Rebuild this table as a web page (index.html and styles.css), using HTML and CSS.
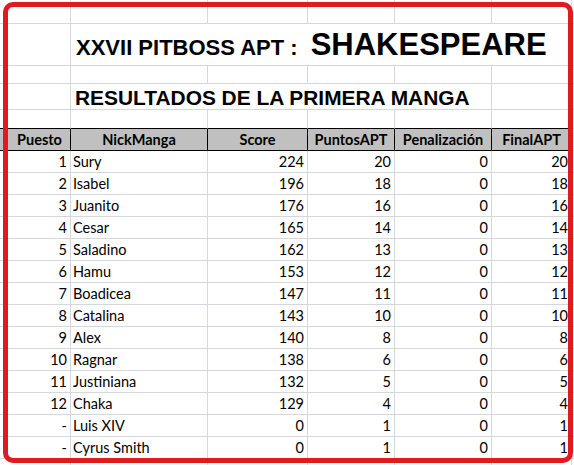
FILE: index.html
```html
<!DOCTYPE html>
<html lang="es">
<head>
<meta charset="utf-8">
<title>XXVII PITBOSS APT : SHAKESPEARE</title>
<link rel="stylesheet" href="styles.css">
</head>
<body>
<div class="sheet">
  <div class="grid">
    <!-- row 1 -->
    <div class="c r1"></div><div class="c r1"></div><div class="c r1"></div><div class="c r1"></div><div class="c r1"></div><div class="c r1"></div><div class="c r1 last"></div>
    <!-- row 2 -->
    <div class="c r2"></div>
    <div class="c r2 span-all title"><span class="t1">XXVII PITBOSS APT :</span><span class="t2">SHAKESPEARE</span></div>
    <!-- row 3 -->
    <div class="c r3"></div><div class="c r3"></div><div class="c r3"></div><div class="c r3"></div><div class="c r3"></div><div class="c r3"></div><div class="c r3 last"></div>
    <!-- row 4 -->
    <div class="c r4"></div>
    <div class="c r4 span-bcde subtitle">RESULTADOS DE LA PRIMERA MANGA</div>
    <div class="c r4"></div><div class="c r4 last"></div>
    <!-- row 5 -->
    <div class="c r5 pre"></div><div class="c r5 pre"></div><div class="c r5 pre"></div><div class="c r5 pre"></div><div class="c r5 pre"></div><div class="c r5 pre"></div><div class="c r5 last"></div>
    <!-- header -->
    <div class="c h first">Puesto</div><div class="c h">NickManga</div><div class="c h">Score</div><div class="c h">PuntosAPT</div><div class="c h">Penalización</div><div class="c h">FinalAPT</div><div class="c d last"></div>
    <!-- data -->
    <div class="c d n">1</div><div class="c d">Sury</div><div class="c d n">224</div><div class="c d n">20</div><div class="c d n">0</div><div class="c d n">20</div><div class="c d last"></div>
    <div class="c d n">2</div><div class="c d">Isabel</div><div class="c d n">196</div><div class="c d n">18</div><div class="c d n">0</div><div class="c d n">18</div><div class="c d last"></div>
    <div class="c d n">3</div><div class="c d">Juanito</div><div class="c d n">176</div><div class="c d n">16</div><div class="c d n">0</div><div class="c d n">16</div><div class="c d last"></div>
    <div class="c d n">4</div><div class="c d">Cesar</div><div class="c d n">165</div><div class="c d n">14</div><div class="c d n">0</div><div class="c d n">14</div><div class="c d last"></div>
    <div class="c d n">5</div><div class="c d">Saladino</div><div class="c d n">162</div><div class="c d n">13</div><div class="c d n">0</div><div class="c d n">13</div><div class="c d last"></div>
    <div class="c d n">6</div><div class="c d">Hamu</div><div class="c d n">153</div><div class="c d n">12</div><div class="c d n">0</div><div class="c d n">12</div><div class="c d last"></div>
    <div class="c d n">7</div><div class="c d">Boadicea</div><div class="c d n">147</div><div class="c d n">11</div><div class="c d n">0</div><div class="c d n">11</div><div class="c d last"></div>
    <div class="c d n">8</div><div class="c d">Catalina</div><div class="c d n">143</div><div class="c d n">10</div><div class="c d n">0</div><div class="c d n">10</div><div class="c d last"></div>
    <div class="c d n">9</div><div class="c d">Alex</div><div class="c d n">140</div><div class="c d n">8</div><div class="c d n">0</div><div class="c d n">8</div><div class="c d last"></div>
    <div class="c d n">10</div><div class="c d">Ragnar</div><div class="c d n">138</div><div class="c d n">6</div><div class="c d n">0</div><div class="c d n">6</div><div class="c d last"></div>
    <div class="c d n">11</div><div class="c d">Justiniana</div><div class="c d n">132</div><div class="c d n">5</div><div class="c d n">0</div><div class="c d n">5</div><div class="c d last"></div>
    <div class="c d n">12</div><div class="c d">Chaka</div><div class="c d n">129</div><div class="c d n">4</div><div class="c d n">0</div><div class="c d n">4</div><div class="c d last"></div>
    <div class="c d n">-</div><div class="c d">Luis XIV</div><div class="c d n">0</div><div class="c d n">1</div><div class="c d n">0</div><div class="c d n">1</div><div class="c d last"></div>
    <div class="c d n">-</div><div class="c d">Cyrus Smith</div><div class="c d n">0</div><div class="c d n">1</div><div class="c d n">0</div><div class="c d n">1</div><div class="c d last"></div>
    <div class="c d"></div><div class="c d"></div><div class="c d"></div><div class="c d"></div><div class="c d"></div><div class="c d"></div><div class="c d last"></div>
  </div>
  <div class="highlight"></div>
</div>
</body>
</html>
```

FILE: styles.css
```css
html, body {
  margin: 0;
  padding: 0;
  background: #ffffff;
}

.sheet {
  position: relative;
  width: 574px;
  height: 465px;
  overflow: hidden;
}

.grid {
  display: grid;
  grid-template-columns: 71px 137px 100px 87px 97px 80px 1fr;
  grid-template-rows: 24px 42px 18px 26px 19px 22px repeat(15, 22px);
  font-family: Lato, "Open Sans", sans-serif;
  font-size: 14.5px;
  color: #000;
}

.c {
  box-sizing: border-box;
  border-right: 1px solid #d4d7dc;
  border-bottom: 1px solid #d4d7dc;
  white-space: nowrap;
  min-width: 0;
}

.span-all {
  grid-column: 2 / span 6;
  border-right: none;
}

.span-bcde {
  grid-column: 2 / span 4;
}

.title {
  display: flex;
  align-items: baseline;
  gap: 13px;
  padding: 0 0 0 5px;
  font-family: "Liberation Sans", Arial, sans-serif;
  font-weight: bold;
  line-height: 42px;
}

.t1 {
  font-size: 22px;
}

.t2 {
  font-size: 31px;
}

.subtitle {
  font-family: "Liberation Sans", Arial, sans-serif;
  font-weight: bold;
  font-size: 20.9px;
  line-height: 27px;
  padding-left: 4px;
  overflow: visible;
}

.pre {
  border-bottom-color: #000;
}

.h {
  background: #c0c0c0;
  border-right-color: #000;
  border-bottom-color: #000;
  font-weight: bold;
  text-align: center;
  line-height: 21px;
}

.h.first {
  padding-left: 9px;
}

.d {
  line-height: 21px;
  padding: 0 3px 0 2px;
}

.n {
  text-align: right;
}

.highlight {
  position: absolute;
  left: 3px;
  top: 2px;
  width: 570px;
  height: 461px;
  box-sizing: border-box;
  border: 5px solid #e01a1f;
  border-radius: 10px;
  pointer-events: none;
}
```
